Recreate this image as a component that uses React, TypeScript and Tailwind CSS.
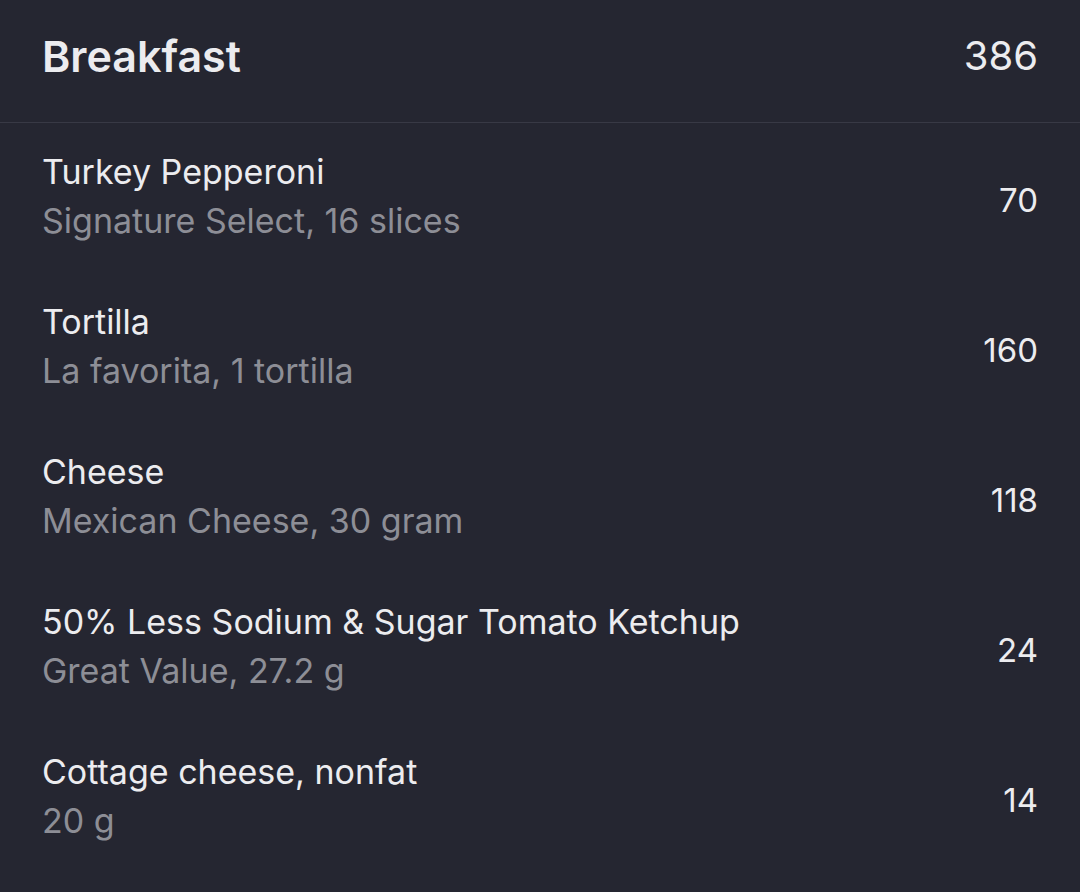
import React from 'react';

const items = [
  { name: 'Turkey Pepperoni', detail: 'Signature Select, 16 slices', cal: 70 },
  { name: 'Tortilla', detail: 'La favorita, 1 tortilla', cal: 160 },
  { name: 'Cheese', detail: 'Mexican Cheese, 30 gram', cal: 118 },
  { name: '50% Less Sodium & Sugar Tomato Ketchup', detail: 'Great Value, 27.2 g', cal: 24 },
  { name: 'Cottage cheese, nonfat', detail: '20 g', cal: 14 },
];

export default function App() {
  return (
    <div className="w-[1080px] h-[892px] overflow-hidden bg-[#252631] font-['Inter',sans-serif] text-[#ececef]">
      <div className="flex h-[123px] items-center justify-between px-[42px] pb-[10px] border-b border-[#383945]">
        <h1 className="text-[43px] font-semibold">Breakfast</h1>
        <span className="text-[40px]">386</span>
      </div>
      {items.map((item, i) => (
        <div key={i} className="flex h-[150px] items-center justify-between pl-[42px] pr-[42px] pb-[4px]">
          <div className="flex flex-col gap-[5px]">
            <span className="text-[34px] leading-[44px]">{item.name}</span>
            <span className="text-[34px] leading-[44px] text-[#8d8e96]">{item.detail}</span>
          </div>
          <span className="text-[33px] pt-[10px]">{item.cal}</span>
        </div>
      ))}
    </div>
  );
}
